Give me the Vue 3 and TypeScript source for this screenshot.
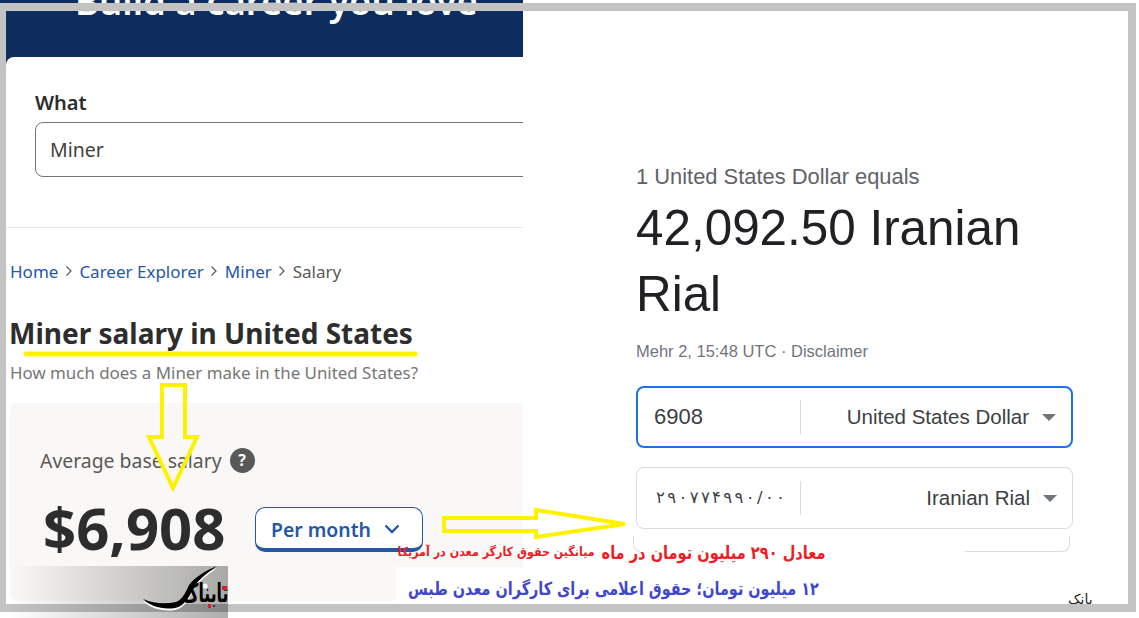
<script setup lang="ts">
const crumbs: string[] = ['Home', 'Career Explorer', 'Miner']
const rialDigits: string[] = [...'۲۹۰۷۷۴۹۹۰/۰۰']
</script>

<template>
  <div class="stage">
    <section class="left">
      <div class="top">
        <div class="hero"><span class="hero-title">Build a career you love</span></div>
        <div class="search">
          <div class="label">What</div>
          <div class="field">Miner</div>
        </div>
      </div>
      <nav class="crumbs">
        <template v-for="c in crumbs" :key="c">
          <a class="crumb">{{ c }}</a>
          <svg class="sep" width="8" height="12" viewBox="0 0 8 12"><path d="M1.5 1.5 6 6l-4.500 4.500" fill="none" stroke="#595959" stroke-width="1.200" /></svg>
        </template>
        <span class="crumb-last">Salary</span>
      </nav>
      <h1 class="title">Miner salary in United States</h1>
      <p class="sub">How much does a Miner make in the United States?</p>
      <div class="salary">
        <div class="avg">
          <span>Average base salary</span>
          <span class="help">?</span>
        </div>
        <div class="amount-row">
          <span class="amount">$6,908</span>
          <div class="period">
            <span>Per month</span>
            <svg width="16" height="10" viewBox="0 0 16 10"><path d="M1.500 1.500 8 8l6.500-6.500" fill="none" stroke="#2557a7" stroke-width="2.400" /></svg>
          </div>
        </div>
      </div>
    </section>

    <section class="right">
      <div class="equals">1 United States Dollar equals</div>
      <div class="rate">42,092.50 Iranian Rial</div>
      <div class="stamp">Mehr 2, 15:48 UTC · Disclaimer</div>
      <div class="conv focus">
        <span class="num">6908</span>
        <span class="cur">United States Dollar</span>
        <i class="caret"></i>
      </div>
      <div class="conv">
        <span class="num fa"><span class="digits"><span v-for="(d, i) in rialDigits" :key="i">{{ d }}</span></span></span>
        <span class="cur">Iranian Rial</span>
        <i class="caret"></i>
      </div>
      <div class="stub"></div>
    </section>

    <span class="bank">بانک</span>

    <div class="frame"></div>

    <svg class="marks" width="1139" height="618" viewBox="0 0 1139 618">
      <path d="M26 354H415" stroke="#fff200" stroke-width="5" stroke-linecap="round" />
      <path d="M162 385H185V437H197L173 488 149 437H162Z" fill="none" stroke="#fff200" stroke-width="4" />
      <path d="M444 518H536V510L625 524 536 537V531H444Z" fill="none" stroke="#fff200" stroke-width="4" />
    </svg>

    <div class="band-red"></div>
    <span class="red-big">معادل ۲۹۰ میلیون تومان در ماه</span>
    <span class="red-small">میانگین حقوق کارگر معدن در آمریکا</span>
    <div class="band-blue"><span class="blue-text">۱۲ میلیون تومان؛ حقوق اعلامی برای کارگران معدن طبس</span></div>

    <div class="logo">
      <svg class="swash" width="218" height="52" viewBox="0 0 218 52">
        <path d="M133 33C145 38 155 38 166 36 172 34 176 26 179 19 184 12 195 5 207 0 197 7 188 14 184 21 180 30 175 40 165 42 152 44 140 40 133 33Z" fill="#fff" transform="translate(0 2)" />
        <path d="M133 33C145 38 155 38 166 36 172 34 176 26 179 19 184 12 195 5 207 0 197 7 188 14 184 21 180 30 175 40 165 42 152 44 140 40 133 33Z" fill="#000" />
        <circle cx="195" cy="20" r="2.500" fill="#fff" />
      </svg>
      <span class="logo-text">تابناک</span>
      <i class="logo-dot d1"></i>
      <i class="logo-dot d2"></i>
    </div>
  </div>
</template>

<style>
html, body { margin: 0; background: #fff; }
</style>

<style scoped>
.stage {
  position: relative;
  width: 1139px;
  height: 618px;
  overflow: hidden;
  display: flex;
  background: #fff;
  font-family: "Noto Sans", sans-serif;
}
.left {
  width: 523px;
  height: 612px;
  flex: none;
  overflow: hidden;
  padding-left: 6px;
  box-sizing: border-box;
  white-space: nowrap;
}
.top { background: #0d2d5e; margin-left: -6px; }
.hero { height: 57px; overflow: hidden; padding-left: 75px; box-sizing: border-box; }
.hero-title {
  display: block;
  margin-top: -19px;
  font-size: 36.500px;
  line-height: 40px;
  font-weight: 600;
  color: #fff;
}
.search {
  margin-left: 6px;
  height: 171px;
  box-sizing: border-box;
  background: #fff;
  border-top-left-radius: 8px;
  border-bottom: 1px solid #e8e8e8;
  padding: 34px 0 0 29px;
}
.label { font-size: 20px; line-height: 24px; font-weight: 600; color: #2d2d2d; }
.field {
  margin-top: 7px;
  width: 640px;
  height: 55px;
  box-sizing: border-box;
  border: 1px solid #767676;
  border-radius: 8px;
  padding-left: 14px;
  font-size: 19.500px;
  line-height: 53px;
  color: #424242;
}
.crumbs {
  display: flex;
  align-items: center;
  gap: 6.500px;
  margin: 31px 0 0 4px;
  height: 24px;
  font-size: 17px;
}
.crumb { color: #2557a7; }
.crumb-last { color: #595959; }
.sep { flex: none; }
.title {
  margin: 30px 0 0 3px;
  font-size: 28px;
  line-height: 40px;
  font-weight: 700;
  color: #2d2d2d;
}
.sub {
  margin: 8px 0 0 4px;
  font-size: 16.900px;
  line-height: 24px;
  color: #767676;
}
.salary {
  margin: 18px -20px 0 4px;
  height: 198px;
  box-sizing: border-box;
  background: #f9f8f6;
  border-radius: 8px;
  padding: 43px 0 0 30px;
}
.avg { display: flex; align-items: center; gap: 8px; height: 28px; font-size: 19.400px; color: #595959; }
.help {
  width: 25px;
  height: 25px;
  border-radius: 50%;
  background: #595959;
  color: #fff;
  font-size: 16px;
  font-weight: 700;
  display: flex;
  align-items: center;
  justify-content: center;
}
.amount-row { display: flex; align-items: center; margin-top: 25px; height: 60px; }
.amount { font-size: 58px; line-height: 60px; font-weight: 700; color: #2d2d2d; margin: -2px 0 0 3px; width: 212px; }
.period {
  width: 168px;
  height: 45px;
  box-sizing: border-box;
  border: 1.500px solid #2557a7;
  border-bottom-width: 4px;
  border-radius: 10px;
  background: #fff;
  color: #2557a7;
  font-size: 19.400px;
  font-weight: 600;
  display: flex;
  align-items: center;
  gap: 13px;
  padding: 3px 0 0 15px;
}
.right {
  flex: 1;
  padding: 163px 66px 0 113px;
  font-family: "Liberation Sans", Arial, sans-serif;
  color: #202124;
}
.equals { font-size: 21.900px; line-height: 28px; color: #5f6368; }
.rate { font-size: 49.400px; line-height: 66px; margin-top: 4px; width: 400px; }
.stamp { margin-top: 13px; font-size: 16.500px; line-height: 22px; color: #70757a; }
.conv {
  margin-top: 19px;
  width: 437px;
  height: 62px;
  box-sizing: border-box;
  border: 1px solid #dadce0;
  border-radius: 8px;
  display: flex;
  align-items: center;
  font-size: 20.500px;
  color: #3c4043;
}
.stamp + .conv { margin-top: 24px; }
.conv.focus { border: 2px solid #1a73e8; }
.num {
  width: 164px;
  height: 34px;
  line-height: 34px;
  box-sizing: border-box;
  padding-left: 17px;
  font-size: 22px;
  border-right: 1px solid #dadce0;
}
.focus .num { width: 163px; padding-left: 16px; }
.num.fa { font-family: "DejaVu Sans", sans-serif; font-size: 16.500px; padding-left: 19px; }
.digits { display: flex; justify-content: space-between; width: 129px; direction: ltr; }
.cur { flex: 1; text-align: right; }
.caret {
  flex: none;
  margin: 0 15px 0 13px;
  width: 0;
  height: 0;
  border-left: 7px solid transparent;
  border-right: 7px solid transparent;
  border-top: 7px solid #70757a;
}
.stub {
  margin: 7px 0 0 -3px;
  width: 437px;
  height: 16px;
  box-sizing: border-box;
  border: 1px solid #dadce0;
  border-top: 0;
  border-radius: 0 0 8px 8px;
}
.frame {
  position: absolute;
  left: 0;
  top: 3px;
  width: 1136px;
  height: 609px;
  box-sizing: border-box;
  border: solid #c3c3c3;
  border-width: 8px 8px 8px 6px;
  pointer-events: none;
}
.marks { position: absolute; left: 0; top: 0; pointer-events: none; }
.band-red {
  position: absolute;
  left: 640px;
  top: 546px;
  width: 325px;
  height: 21px;
  background: #fff;
}
.red-big {
  position: absolute;
  right: 314px;
  top: 541px;
  direction: rtl;
  white-space: nowrap;
  font-family: "DejaVu Sans", sans-serif;
  font-weight: 700;
  font-size: 18px;
  line-height: 24px;
  color: #ee1c25;
  transform: scaleX(0.81);
  transform-origin: right center;
}
.red-small {
  position: absolute;
  right: 544px;
  top: 543px;
  direction: rtl;
  white-space: nowrap;
  font-family: "DejaVu Sans", sans-serif;
  font-weight: 700;
  font-size: 12.500px;
  line-height: 18px;
  color: #ee1c25;
  transform: scaleX(0.89);
  transform-origin: right center;
}
.band-blue {
  position: absolute;
  left: 396px;
  top: 567px;
  width: 570px;
  height: 37px;
  background: #fff;
  box-sizing: border-box;
  padding-left: 12px;
}
.blue-text {
  display: inline-block;
  direction: rtl;
  font-family: "DejaVu Sans", sans-serif;
  font-weight: 700;
  font-size: 18px;
  line-height: 44px;
  color: #3f48cc;
  white-space: nowrap;
  transform: scaleX(0.8);
  transform-origin: left center;
}
.bank {
  position: absolute;
  left: 1068px;
  top: 590px;
  font-family: "DejaVu Sans", sans-serif;
  font-size: 14px;
  line-height: 18px;
  color: #222;
}
.logo {
  position: absolute;
  left: 10px;
  top: 566px;
  width: 218px;
  height: 52px;
  overflow: hidden;
  background: linear-gradient(90deg, rgba(0, 0, 0, 0), rgba(0, 0, 0, 0.32));
}
.swash { position: absolute; left: 0; top: 0; }
.logo-text {
  position: absolute;
  right: 0;
  top: 9px;
  font-family: "DejaVu Sans", sans-serif;
  font-weight: 700;
  font-size: 26px;
  line-height: 36px;
  color: #000;
  transform: scaleX(0.6);
  transform-origin: right center;
}
.logo-dot { position: absolute; width: 5px; height: 4px; background: #e01b24; }
.d1 { right: 1px; top: 20px; }
.d2 { right: 17px; top: 38px; width: 3px; }
</style>
